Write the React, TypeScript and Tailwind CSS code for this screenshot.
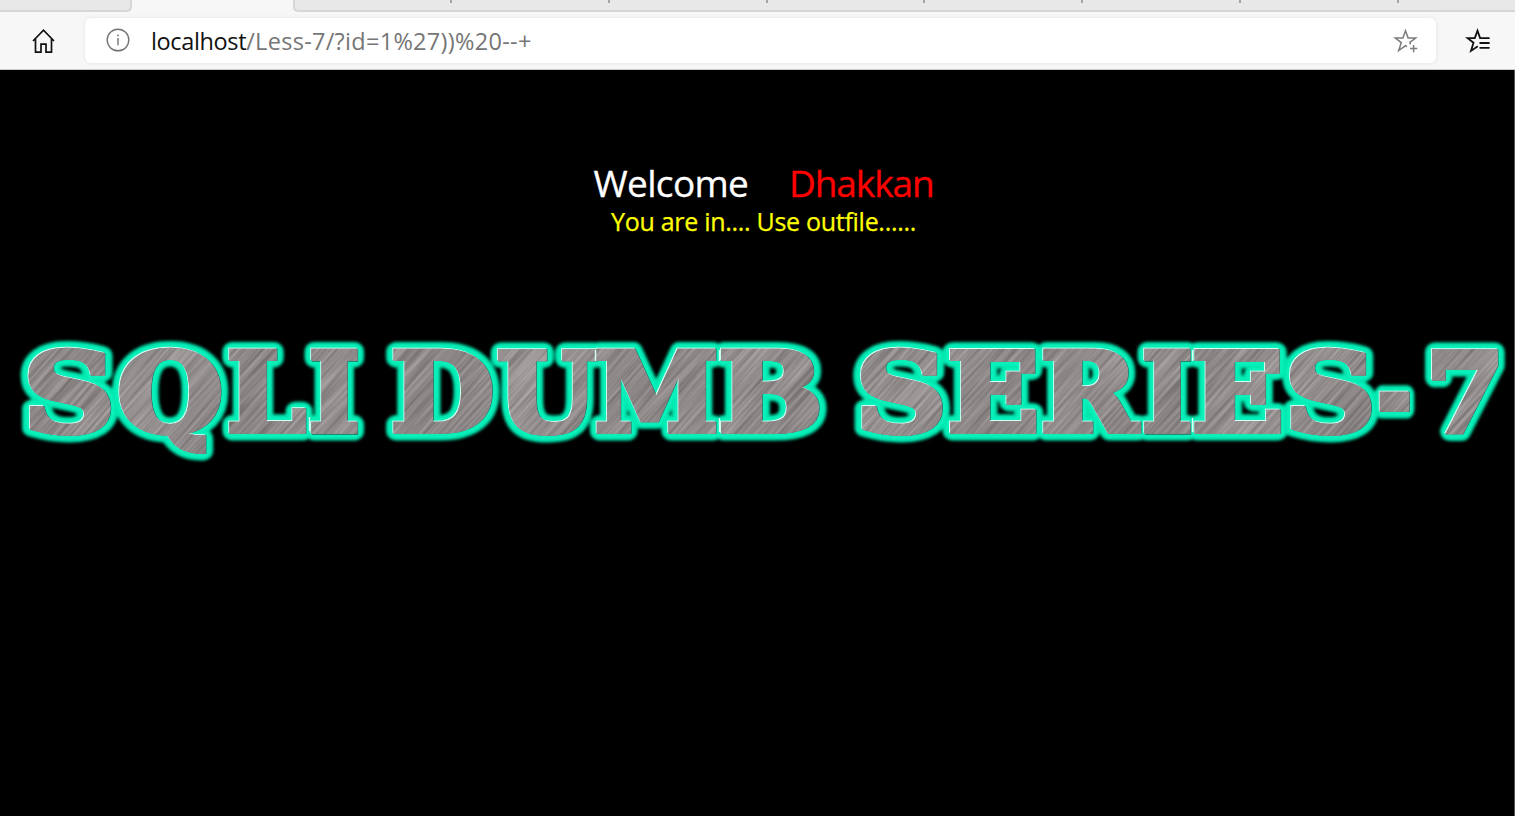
import React from "react";

function HomeIcon() {
  return (
    <svg width="24" height="26" viewBox="0 0 24 26" fill="none" stroke="#111" strokeWidth="1.7">
      <path d="M1 13 L11.5 2.2 L22 13 M3.5 11 V24.2 H9 V16.2 H14 V24.2 H19.5 V11" strokeLinejoin="miter" />
    </svg>
  );
}

function InfoIcon() {
  return (
    <svg width="24" height="24" viewBox="0 0 24 24" fill="none" stroke="#757575" strokeWidth="1.4">
      <circle cx="12" cy="12" r="10.8" />
      <path d="M12 10 V17.2" />
      <circle cx="12" cy="7.4" r="0.9" fill="#757575" stroke="none" />
    </svg>
  );
}

function AddFavoriteIcon() {
  return (
    <svg width="26" height="26" viewBox="0 0 26 26" fill="none" stroke="#7c7c7c" strokeWidth="1.5">
      <path d="M14 18.6 L12.5 17.6 L5.7 22.6 L8.3 14.6 L2.3 10 H9.9 L12.5 2.8 L15.1 10 H22.7 L16.9 14.4 L17.4 16.4" />
      <path d="M20.6 17 V24.2 M17 20.6 H24.2" />
    </svg>
  );
}

function FavoritesIcon() {
  return (
    <svg width="26" height="26" viewBox="0 0 26 26" fill="none" stroke="#111" strokeWidth="1.8">
      <path d="M12.8 18.3 L6 22.9 L8.5 14.7 L2.6 10.1 H9.8 L12.5 2.7 L15.1 10.1 H24.6" />
      <path d="M14.5 15 H24.6 M14.5 19.9 H24.6" />
    </svg>
  );
}

function TabStrip() {
  return (
    <div className="flex h-3 bg-[#f7f7f7]">
      <div className="h-3 w-[132px] rounded-br-[5px] border-r-2 border-b-2 border-[#d6d6d6] bg-[#e8e8e8]" />
      <div className="w-[161px]" />
      <div className="flex h-3 flex-1 items-start rounded-bl-[5px] border-b-2 border-l-2 border-[#d6d6d6] bg-[#e8e8e8] pl-[155px]">
        {[0, 1, 2, 3, 4, 5, 6].map((i) => (
          <div key={i} className="h-[3px] w-[157.8px] shrink-0 border-l-2 border-[#a5a5a5] last:w-[2px]" />
        ))}
      </div>
    </div>
  );
}

function Toolbar() {
  return (
    <div className="flex h-[58px] items-start border-b border-[#c9c9c9] bg-[#f7f7f7] pt-1.5">
      <div className="w-[85px] pt-[10px] pl-8">
        <HomeIcon />
      </div>
      <div className="flex h-[45px] w-[1351px] items-start rounded-md bg-white pr-[17px] pl-[21px] shadow-[0_0_4px_rgba(0,0,0,0.09)]">
        <div className="pt-[10px]">
          <InfoIcon />
        </div>
        <div className="ml-[21px] flex-1 pt-[6px] font-['Open_Sans','Noto_Sans',sans-serif] text-[23.5px] leading-[35px] tracking-[0.29px] whitespace-nowrap text-[#767676]">
          <span className="tracking-[-0.36px] text-[#111]">localhost</span>/Less-7/?id=1%27))%20--+
        </div>
        <div className="pt-[10px]">
          <AddFavoriteIcon />
        </div>
      </div>
      <div className="pt-[10px] pl-[29px]">
        <FavoritesIcon />
      </div>
    </div>
  );
}

type Glyph = { char: string; x: number; stretch: number };

const titleGlyphs: Glyph[] = [
  { char: "S", x: 23.5, stretch: 1.17 },
  { char: "Q", x: 117.5, stretch: 1.12 },
  { char: "L", x: 227, stretch: 1.03 },
  { char: "I", x: 309, stretch: 1 },
  { char: "D", x: 391, stretch: 1.1 },
  { char: "U", x: 497, stretch: 1.06 },
  { char: "M", x: 595, stretch: 1.03 },
  { char: "B", x: 718.5, stretch: 1.14 },
  { char: "S", x: 856, stretch: 1.16 },
  { char: "E", x: 947.5, stretch: 1.11 },
  { char: "R", x: 1041, stretch: 1.07 },
  { char: "I", x: 1142, stretch: 1 },
  { char: "E", x: 1192, stretch: 1.11 },
  { char: "S", x: 1285, stretch: 1.16 },
  { char: "-", x: 1377.5, stretch: 0.76 },
  { char: "7", x: 1426, stretch: 1.04 },
];

function Banner() {
  return (
    <svg width="1514" height="150" viewBox="0 320 1514 150" className="block" aria-label="SQLI DUMB SERIES-7">
      <defs>
        <linearGradient id="steel" gradientUnits="userSpaceOnUse" x1="0" y1="350" x2="120" y2="440" spreadMethod="reflect">
          <stop offset="0" stopColor="#969090" />
          <stop offset="0.5" stopColor="#8a8484" />
          <stop offset="1" stopColor="#9c9696" />
        </linearGradient>
        <filter id="brush" x="0" y="0" width="100%" height="100%" colorInterpolationFilters="sRGB">
          <feTurbulence type="fractalNoise" baseFrequency="0.012 0.34" numOctaves="2" seed="8" />
          <feColorMatrix values="1.4 0 0 0 -0.15  1.4 0 0 0 -0.17  1.4 0 0 0 -0.17  0 0 0 0 0.22" />
        </filter>
        <filter id="glow" filterUnits="userSpaceOnUse" x="0" y="320" width="1514" height="150">
          <feGaussianBlur stdDeviation="1.8" />
        </filter>
        <filter id="glowCore" filterUnits="userSpaceOnUse" x="0" y="320" width="1514" height="150">
          <feGaussianBlur stdDeviation="0.9" />
        </filter>
        <mask id="letters" maskUnits="userSpaceOnUse" x="0" y="320" width="1514" height="150">
          <use href="#title" fill="#fff" stroke="#fff" strokeWidth="5.6" />
        </mask>
      </defs>
      <use href="#title" y="0.5" fill="#00e8b0" stroke="#00e8b0" strokeWidth="19" strokeLinejoin="round" filter="url(#glow)" />
      <use href="#title" y="0.5" fill="#08f2bd" stroke="#08f2bd" strokeWidth="13" strokeLinejoin="round" opacity="0.85" filter="url(#glowCore)" />
      <use href="#title" x="0.7" y="0.7" fill="#246a5c" stroke="#246a5c" strokeWidth="5.6" />
      <use href="#title" x="-0.9" y="-0.9" fill="#d6fff4" stroke="#d6fff4" strokeWidth="5.6" />
      <g fill="#918b8b" stroke="#918b8b" strokeWidth="5.6">
        <g id="title" fontFamily="'DejaVu Serif', serif" fontWeight="700" fontSize="108">
          {titleGlyphs.map((g, i) => (
            <text key={i} transform={`translate(${g.x} 430.8) scale(${g.stretch} 1)`}>
              {g.char}
            </text>
          ))}
        </g>
      </g>
      <g mask="url(#letters)">
        <rect x="0" y="320" width="1514" height="150" fill="url(#steel)" />
        <g transform="rotate(-48 757 390)">
          <rect x="0" y="-400" width="1514" height="1600" filter="url(#brush)" />
        </g>
      </g>
      <path d="M309.5 417 V431 M595.5 350 V361 M719.5 350 V361 M719.5 418 V432 M1192.5 350 V361 M1192.5 418 V432" stroke="#d6fff4" strokeWidth="1.4" />
    </svg>
  );
}

export default function App() {
  return (
    <div className="flex h-[816px] w-[1515px] flex-col overflow-hidden bg-black">
      <TabStrip />
      <Toolbar />
      <main className="flex flex-1 flex-col border-r border-[#555] bg-black font-['Open_Sans','Noto_Sans',sans-serif]">
        <div className="mt-[87px] flex h-[52px] items-center pl-[593.5px] text-[37px] whitespace-nowrap [-webkit-text-stroke:0.3px_currentColor]">
          <span className="w-[195.5px] tracking-[-0.65px] text-white">Welcome</span>
          <span className="tracking-[-1.1px] text-[#f00]">Dhakkan</span>
        </div>
        <div className="h-[41px] pl-[611px] text-[25px] leading-[24px] tracking-[-0.29px] whitespace-nowrap text-[#ff0] [-webkit-text-stroke:0.25px_currentColor]">
          You are in.... Use outfile......
        </div>
        <div className="mt-[70px]">
          <Banner />
        </div>
      </main>
    </div>
  );
}
